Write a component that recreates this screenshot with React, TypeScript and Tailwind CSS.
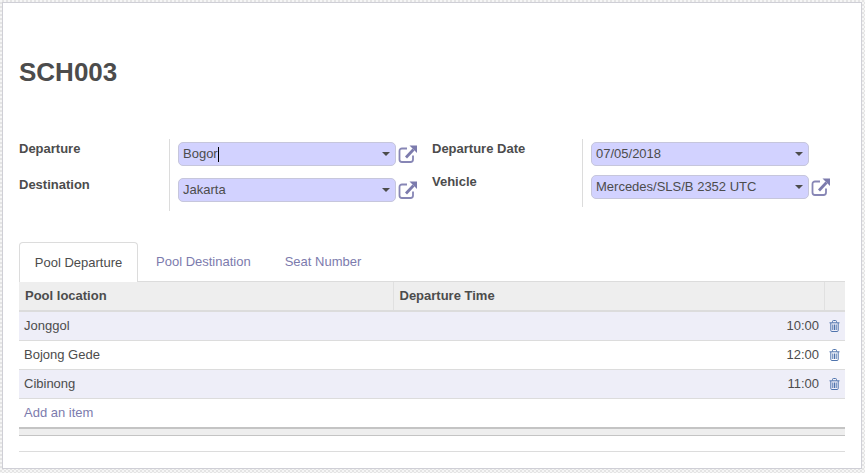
function ExternalLink() {
  return (
    <svg width="20" height="20" viewBox="0 0 20 20" fill="none" className="shrink-0">
      <path d="M9 4.500H4a2.500 2.500 0 0 0-2.500 2.500v8.500A2.500 2.500 0 0 0 4 18h8.500a2.500 2.500 0 0 0 2.500-2.500V11.500" stroke="#8786b5" strokeWidth="1.800" />
      <path d="M8 13.500 15.500 5.500" stroke="#7c7bad" strokeWidth="2.800" />
      <path d="M11.500 1.500h7.500v7.500z" fill="#7c7bad" />
    </svg>
  );
}

function Trash() {
  return (
    <svg width="11" height="12" viewBox="0 0 11 12" fill="none">
      <path d="M.5 2.800h10M3.500 2.500V1.500q0-1 1-1h2q1 0 1 1v1M1.800 3v7.500q0 1 1 1h5.400q1 0 1-1V3" stroke="#4f74ad" />
      <path d="M3.800 4.500v5.500M5.500 4.500v5.500M7.200 4.500v5.500" stroke="#4f74ad" />
    </svg>
  );
}

function Field({ value, caret }: { value: string; caret?: boolean }) {
  return (
    <div className="flex h-6 w-[218px] shrink-0 items-center justify-between rounded-[5px] border border-[#c6c6dc] bg-[#d2d2ff] pl-1 pr-[3px] text-[#4c4c4c]">
      <span className="flex items-center">
        {value}
        {caret && <span className="h-[15px] w-px bg-black" />}
      </span>
      <span className="mr-[2px] h-0 w-0 border-x-[4px] border-t-[4px] border-x-transparent border-t-[#4c4c4c]" />
    </div>
  );
}

export default function App() {
  const rows = [
    { place: 'Jonggol', time: '10:00', odd: true },
    { place: 'Bojong Gede', time: '12:00', odd: false },
    { place: 'Cibinong', time: '11:00', odd: true },
  ];

  return (
    <div className="h-[473px] w-[865px] overflow-hidden bg-[repeating-conic-gradient(#e4e4e4_0_25%,#f6f6f6_0_50%)] bg-[length:4px_4px] pl-[2px] pt-[2px] font-['Liberation_Sans',Arial,sans-serif] text-[13px] leading-[18px] text-[#4c4c4c]">
      <div className="h-[467px] w-[860px] border border-[#cfcfd6] bg-white pl-4">
        <h1 className="pt-[53px] text-[26px] font-bold leading-[32px]">SCH003</h1>

        <div className="mt-[52px] flex">
          <div className="flex w-[413px]">
            <div className="flex w-[150px] flex-col gap-[18px] font-bold">
              <span>Departure</span>
              <span>Destination</span>
            </div>
            <div className="-mt-px flex h-[72px] flex-col gap-3 border-l border-[#dcdcdc] pl-2 pt-[3px]">
              <div className="flex items-center gap-[2px]">
                <Field value="Bogor" caret />
                <ExternalLink />
              </div>
              <div className="flex items-center gap-[2px]">
                <Field value="Jakarta" />
                <ExternalLink />
              </div>
            </div>
          </div>
          <div className="flex items-start">
            <div className="flex w-[150px] flex-col gap-[15px] font-bold">
              <span>Departure Date</span>
              <span>Vehicle</span>
            </div>
            <div className="-mt-px flex h-[68px] flex-col gap-[9px] border-l border-[#dcdcdc] pl-2 pt-[3px]">
              <Field value="07/05/2018" />
              <div className="flex items-center gap-[2px]">
                <Field value="Mercedes/SLS/B 2352 UTC" />
                <ExternalLink />
              </div>
            </div>
          </div>
        </div>

        <div className="mt-[31px] w-[826px]">
          <div className="flex h-10 items-stretch border-b border-[#dcdcdc]">
            <div className="-mb-px flex w-[119px] items-center justify-center rounded-t-[4px] border border-b-0 border-[#dcdcdc] bg-white">Pool Departure</div>
            <div className="flex items-center pl-[18px] text-[#7c7bad]">Pool Destination</div>
            <div className="flex items-center pl-[34px] text-[#7c7bad]">Seat Number</div>
          </div>

          <table className="w-full table-fixed border-collapse">
            <colgroup>
              <col className="w-[374px]" />
              <col className="w-[431px]" />
              <col className="w-[21px]" />
            </colgroup>
            <thead>
              <tr className="h-[29px] border-b-2 border-[#dcdcdc] bg-[#eeeeee] text-left font-bold">
                <th className="border-r border-[#e0e0e0] pl-[6px]">Pool location</th>
                <th className="border-r border-[#e0e0e0] pl-[6px]">Departure Time</th>
                <th />
              </tr>
            </thead>
            <tbody>
              {rows.map((r) => (
                <tr key={r.place} className={`h-[29px] border-b border-[#dcdcdc] ${r.odd ? 'bg-[#eeeef8]' : 'bg-white'}`}>
                  <td className="pl-[5px]">{r.place}</td>
                  <td className="pr-[5px] text-right">{r.time}</td>
                  <td className="pl-[5px]"><Trash /></td>
                </tr>
              ))}
              <tr className="h-[29px]">
                <td className="pl-[5px] text-[#7c7bad]">Add an item</td>
                <td />
                <td />
              </tr>
            </tbody>
          </table>

          <div className="h-[9px] border-b border-t-2 border-b-[#c4c4c4] border-t-[#c4c4c4] bg-[#eeeeee]" />
          <div className="mt-[15px] h-px bg-[#dcdcdc]" />
        </div>
      </div>
    </div>
  );
}
